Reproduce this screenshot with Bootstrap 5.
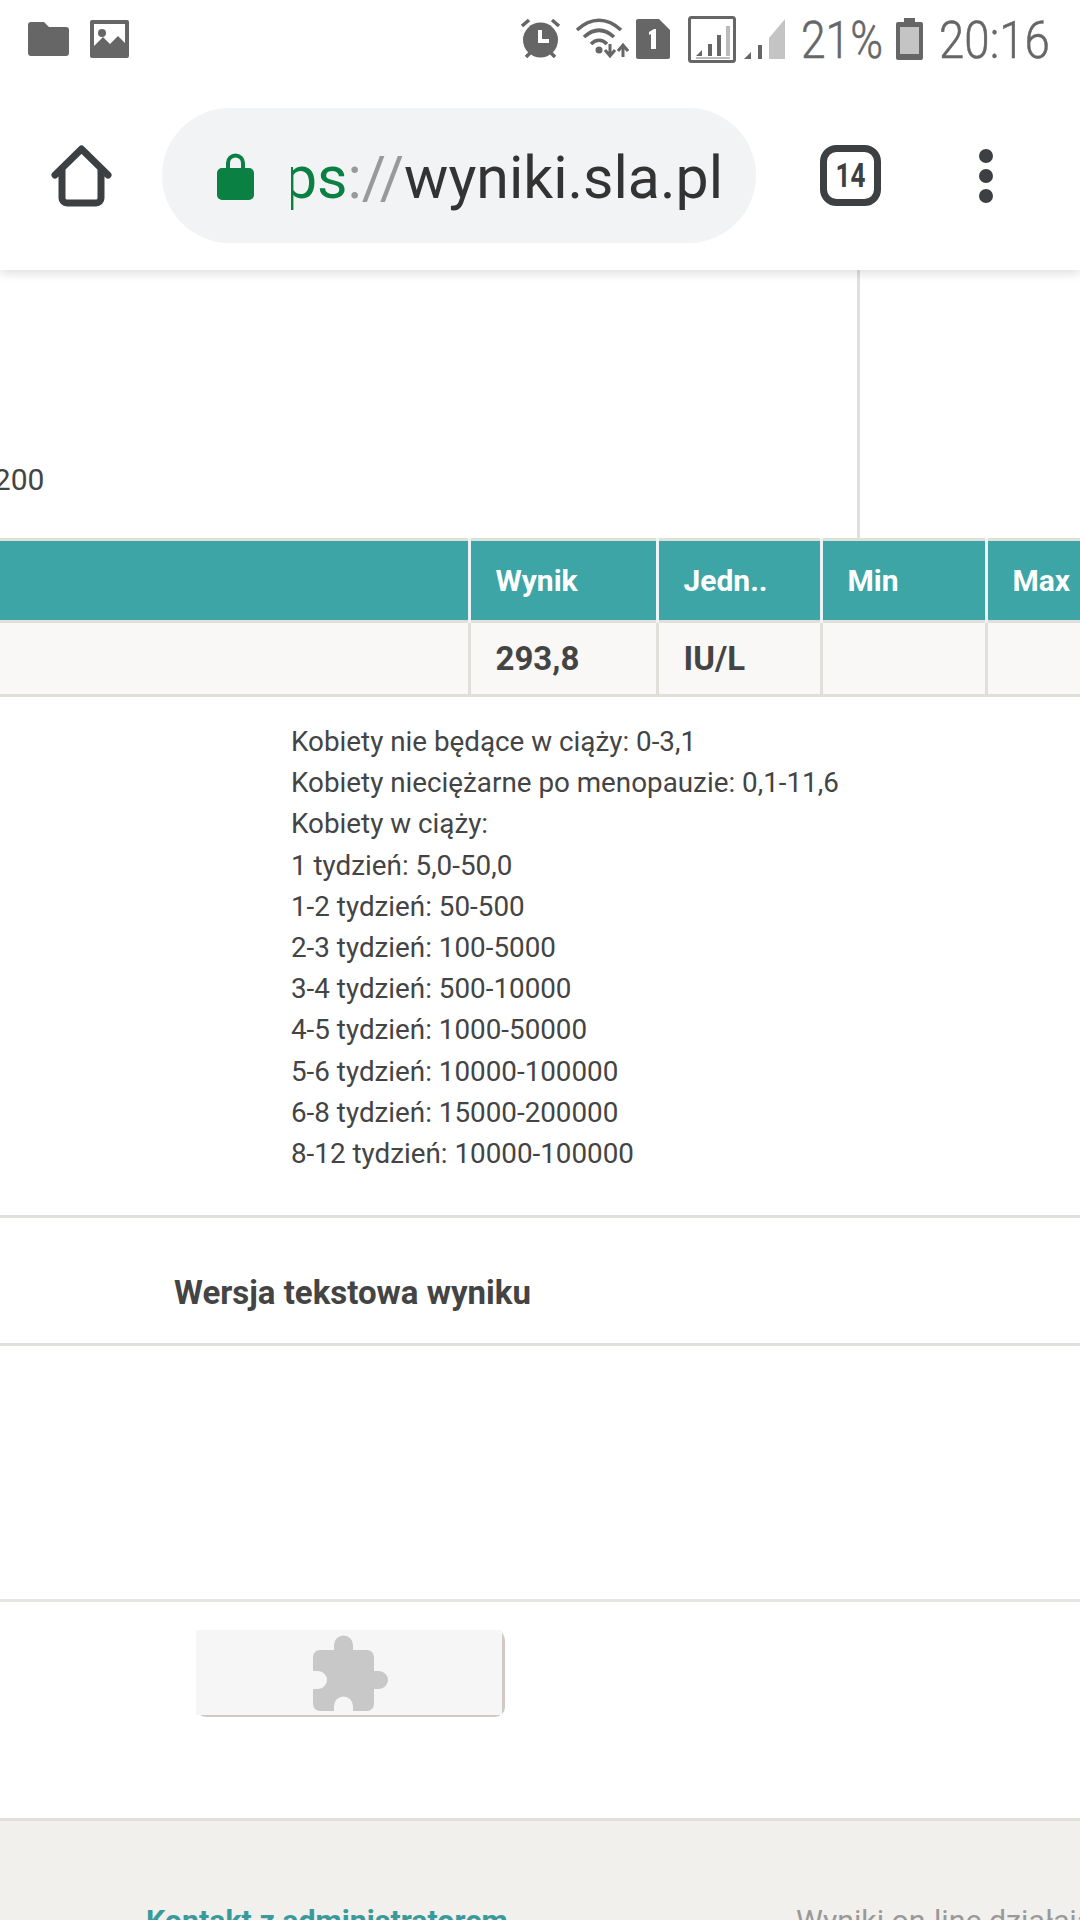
<!DOCTYPE html>
<html lang="pl"><head><meta charset="utf-8"><title>Wyniki</title>
<link href="https://cdn.jsdelivr.net/npm/bootstrap@5.3.0/dist/css/bootstrap.min.css" rel="stylesheet">
<style>
html,body{height:1920px;overflow:hidden;background:#fff}
body{font-family:Roboto,"Noto Sans",sans-serif;color:#444}
.sbar{height:78px;padding-left:28px;color:#666;position:relative;z-index:3;background:#fff}
.sbar svg{flex:none;display:block}
.st{font-size:51px;line-height:78px;padding-top:3px;font-weight:300;display:inline-block;flex:none;transform-origin:left center;color:#666;white-space:nowrap;-webkit-text-stroke:.5px #666}
.st-pct{width:81px;margin-right:14px;transform:scaleX(.87)}
.st-time{width:108px;margin-left:16px;transform:scaleX(.895)}
.i-img{margin-left:21px}.i-alarm{margin-left:auto}.i-wifi{margin-left:14px}.i-sim{margin-left:7px}.i-box{margin-left:18px}.i-sig{margin-left:8px}.i-bat{margin-left:0}
.i-sig{margin-right:16px}
.sbar-end{width:33px;flex:none}
.tbar{height:192px;position:relative;z-index:2;box-shadow:0 3px 10px rgba(0,0,0,.14);background:#fff;padding-top:3px}
.i-home{margin-left:51px;flex:none}
.pill{width:594px;height:135px;margin-left:50px;background:#f1f3f4;border-radius:68px;flex:none;padding-left:55px}
.addr{width:432px;margin-left:33px;overflow:hidden;font-size:59px;line-height:84px;padding-top:4px;white-space:nowrap;color:#333;flex:none}
.addr-g{color:#0b8043}.addr-s{color:#999}
.i-tabs{margin-left:64px;flex:none}.i-dots{margin-left:98px;flex:none}
.chart{height:268px;width:860px;border-right:3px solid #e0dfda;padding-bottom:38px;overflow:hidden;font-size:30px;line-height:40px;color:#444}
.chart-lbl{margin-left:-23px}
.res{table-layout:fixed;width:1080px;margin:0;border-collapse:collapse;border-top:3px solid #e0dfda;--bs-table-bg:transparent}
.res th,.res td{padding:0 0 0 25px;vertical-align:middle;font-weight:700;overflow:hidden;white-space:nowrap}
.res th{height:82px;background:#3da5a6;color:#fff;font-size:30px;border:0;border-left:3px solid #eef4f3}
.res td{height:74px;background:#faf8f6;color:#444;font-size:33px;border:0;border-left:3px solid #e0dfda;border-top:3px solid #e0dfda;border-bottom:3px solid #e0dfda}
.res th:first-child,.res td:first-child{border-left:0}
.ranges{height:521px;padding:0 0 0 291px;border-bottom:3px solid #e0dfda}
.ranges-in{padding-top:24px;font-size:27.8px;line-height:41.2px;color:#444}
.txt-head{height:128px;padding:24px 0 0 174px;border-bottom:3px solid #e0dfda;font-size:33px;font-weight:700;color:#444}
.blank{height:256px;border-bottom:3px solid #e6e5e0}
.plug-row{height:219px;padding:28px 0 0 196px;box-shadow:inset 0 -3px 0 #e0dfda}
.plug{width:309px;height:87px;padding:0 3px 2px 0;background:#cdcbc2;border-radius:10px}
.plug-in{height:85px;background:#f6f6f6;padding-left:2px}
.foot{height:100px;background:#f2f0ed;padding-top:80px;font-size:30.3px;line-height:40px;white-space:nowrap;overflow:hidden}
.foot-l{margin-left:146px;width:650px;flex:none;font-weight:700;color:#3a9a9b}
.foot-r{color:#999;font-weight:400}
</style></head><body>

<div class="sbar d-flex align-items-center">
<svg width="41" height="34" viewBox="0 0 41 34"><path d="M3 0H16L21 5H38a3 3 0 0 1 3 3V31a3 3 0 0 1-3 3H3a3 3 0 0 1-3-3V3a3 3 0 0 1 3-3Z" fill="#666"/></svg>
<svg class="i-img" width="39" height="38" viewBox="0 0 39 38"><path fill-rule="evenodd" d="M2 0H37a2 2 0 0 1 2 2V36a2 2 0 0 1-2 2H2a2 2 0 0 1-2-2V2a2 2 0 0 1 2-2ZM4 4V26L13 17 20 24 28 16 35 23V4Z" fill="#666"/><circle cx="12" cy="13" r="4" fill="#666"/></svg>
<svg class="i-alarm" width="41" height="42" viewBox="0 0 41 42"><circle cx="20.5" cy="22" r="17.5" fill="#666"/><path d="M2 8 9 2M39 8 32 2M6 39l4-4M35 39l-4-4" stroke="#666" stroke-width="3.5"/><path d="M20 12V23H29" stroke="#fff" stroke-width="4" fill="none"/></svg>
<svg class="i-wifi" width="54" height="44" viewBox="0 0 54 44"><path d="M2 13C16 0 32 0 46 13M9 20C19 11 29 11 39 20M16 27C21 22 27 22 32 27" stroke="#666" stroke-width="3.6" fill="none"/><circle cx="24" cy="33" r="3.5" fill="#666"/><path d="M35 27V38M30 33l5 6 5-6M48 40V29M43 34l5-6 5 6" stroke="#666" stroke-width="3" fill="none"/></svg>
<svg class="i-sim" width="34" height="40" viewBox="0 0 34 40"><path d="M2 0H23L34 11V38a2 2 0 0 1-2 2H2a2 2 0 0 1-2-2V2a2 2 0 0 1 2-2Z" fill="#666"/><path d="M13 13l5-3h2V30h-5V15l-2 1Z" fill="#fff"/></svg>
<svg class="i-box" width="48" height="47" viewBox="0 0 48 47"><rect x="1.5" y="1.5" width="45" height="44" rx="2" fill="none" stroke="#666" stroke-width="3"/><path d="M8 40l6-6v6ZM20 28h4V40H20ZM29 19h4V40H29Z" fill="#666"/><path d="M38 10h4V40H38ZM8 41H42V43H8Z" fill="#bbb"/></svg>
<svg class="i-sig" width="41" height="42" viewBox="0 0 41 42"><path d="M0 41 7 34V41ZM14 27h4V41H14Z" fill="#666"/><path d="M25 20 41 1V41H25Z" fill="#c4c4c4"/></svg>
<span class="st st-pct">21%</span>
<svg class="i-bat" width="27" height="42" viewBox="0 0 27 42"><path fill-rule="evenodd" d="M8 0H19V4H25a2 2 0 0 1 2 2V40a2 2 0 0 1-2 2H2a2 2 0 0 1-2-2V6a2 2 0 0 1 2-2H8Z" fill="#666"/><rect x="4" y="9" width="19" height="27" fill="#c4c4c4"/></svg>
<span class="st st-time">20:16</span>
<span class="sbar-end"></span>
</div>

<div class="tbar d-flex align-items-center">
<svg class="i-home" width="61" height="62" viewBox="0 0 61 62"><path d="M4 30 30.5 4 57 30M11 24V53a5 5 0 0 0 5 5H45a5 5 0 0 0 5-5V24" fill="none" stroke="#3c4043" stroke-width="7" stroke-linecap="round" stroke-linejoin="round"/></svg>
<div class="pill d-flex align-items-center">
<svg class="flex-shrink-0 me-1" width="37" height="48" viewBox="0 0 37 48"><path fill-rule="evenodd" d="M9 16V11a9.5 9.5 0 0 1 19 0V16H32a5 5 0 0 1 5 5V43a5 5 0 0 1-5 5H5a5 5 0 0 1-5-5V21a5 5 0 0 1 5-5ZM13 16H24V11a5.5 5.5 0 0 0-11 0Z" fill="#0b8043"/></svg>
<div class="addr d-flex justify-content-end"><span class="flex-shrink-0"><span class="addr-g">https</span><span class="addr-s">://</span>wyniki.sla.pl</span></div>
</div>
<svg class="i-tabs" width="61" height="61" viewBox="0 0 61 61"><rect x="3.5" y="3.5" width="54" height="54" rx="13" fill="none" stroke="#3c4043" stroke-width="7"/><text x="30.5" y="42" text-anchor="middle" font-family="Roboto" font-weight="700" font-size="33" fill="#3c4043" textLength="30" lengthAdjust="spacingAndGlyphs">14</text></svg>
<svg class="i-dots" width="14" height="54" viewBox="0 0 14 54"><circle cx="7" cy="7" r="7" fill="#3c4043"/><circle cx="7" cy="27" r="7" fill="#3c4043"/><circle cx="7" cy="47" r="7" fill="#3c4043"/></svg>
</div>

<div class="chart d-flex align-items-end"><span class="chart-lbl">1200</span></div>

<table class="table res">
<colgroup><col style="width:469px"><col style="width:188px"><col style="width:164px"><col style="width:165px"><col style="width:94px"></colgroup>
<thead><tr><th></th><th>Wynik</th><th>Jedn..</th><th>Min</th><th>Max</th></tr></thead>
<tbody><tr><td></td><td>293,8</td><td>IU/L</td><td></td><td></td></tr></tbody>
</table>

<div class="ranges"><div class="ranges-in">
Kobiety nie będące w ciąży: 0-3,1<br>Kobiety nieciężarne po menopauzie: 0,1-11,6<br>Kobiety w ciąży:<br>1 tydzień: 5,0-50,0<br>1-2 tydzień: 50-500<br>2-3 tydzień: 100-5000<br>3-4 tydzień: 500-10000<br>4-5 tydzień: 1000-50000<br>5-6 tydzień: 10000-100000<br>6-8 tydzień: 15000-200000<br>8-12 tydzień: 10000-100000
</div></div>

<div class="txt-head d-flex align-items-center">Wersja tekstowa wyniku</div>
<div class="blank"></div>
<div class="plug-row"><div class="plug"><div class="plug-in d-flex align-items-center justify-content-center">
<svg width="75" height="76" viewBox="0 0 75 76"><path d="M7 15H21V10a9.5 9.5 0 0 1 19 0V15H54a7 7 0 0 1 7 7V36H66a9 9 0 0 1 0 18H61V69a7 7 0 0 1-7 7H40V71a9.5 9.5 0 0 0-19 0V76H7a7 7 0 0 1-7-7V54H5a9 9 0 0 0 0-18H0V22a7 7 0 0 1 7-7Z" fill="#c8c8c8"/></svg>
</div></div></div>
<div class="foot d-flex"><div class="foot-l">Kontakt z administratorem</div><div class="foot-r">Wyniki on-line działają</div></div>
</body></html>
